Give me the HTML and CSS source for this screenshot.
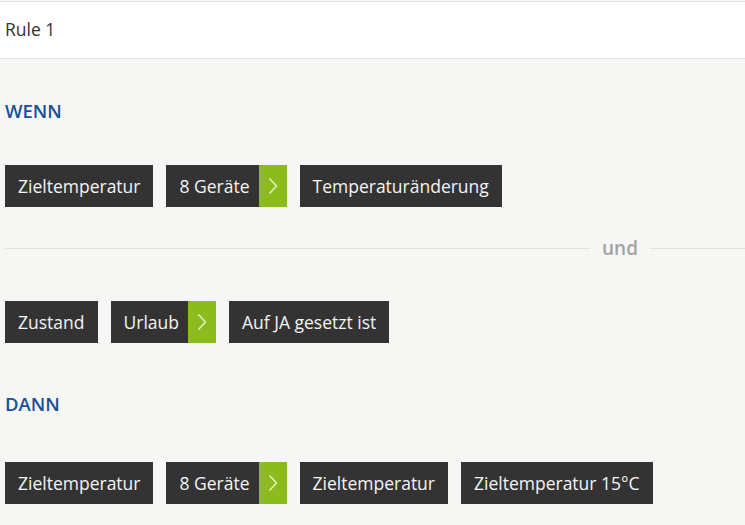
FILE: index.html
```html
<!DOCTYPE html>
<html lang="de">
<head>
<meta charset="utf-8">
<title>Rule 1</title>
<link rel="stylesheet" href="styles.css">
</head>
<body>
<div class="page">
  <header class="rule-header">Rule 1</header>
  <main class="rule-body">
    <h2 class="section-title title-wenn">WENN</h2>
    <div class="chip-row row-first">
      <span class="chip">Zieltemperatur</span>
      <span class="chip chip-split"><span class="chip-label">8 Geräte</span><span class="chip-arrow"><svg width="10" height="18" viewBox="0 0 10 18"><path d="M1.5 1.5 L8.5 9 L1.5 16.5" fill="none" stroke="currentColor" stroke-width="1.4"/></svg></span></span>
      <span class="chip">Temperaturänderung</span>
    </div>
    <div class="separator"><span class="sep-line"></span><span class="sep-text">und</span><span class="sep-line sep-line-end"></span></div>
    <div class="chip-row row-second">
      <span class="chip">Zustand</span>
      <span class="chip chip-split"><span class="chip-label">Urlaub</span><span class="chip-arrow"><svg width="10" height="18" viewBox="0 0 10 18"><path d="M1.5 1.5 L8.5 9 L1.5 16.5" fill="none" stroke="currentColor" stroke-width="1.4"/></svg></span></span>
      <span class="chip">Auf JA gesetzt ist</span>
    </div>
    <h2 class="section-title title-dann">DANN</h2>
    <div class="chip-row row-third">
      <span class="chip">Zieltemperatur</span>
      <span class="chip chip-split"><span class="chip-label">8 Geräte</span><span class="chip-arrow"><svg width="10" height="18" viewBox="0 0 10 18"><path d="M1.5 1.5 L8.5 9 L1.5 16.5" fill="none" stroke="currentColor" stroke-width="1.4"/></svg></span></span>
      <span class="chip">Zieltemperatur</span>
      <span class="chip">Zieltemperatur 15°C</span>
    </div>
  </main>
</div>
</body>
</html>
```

FILE: styles.css
```css
* { box-sizing: border-box; }
html, body { margin: 0; padding: 0; }
body {
  background: #f6f6f4;
  font-family: "Open Sans", "Liberation Sans", sans-serif;
  color: #333;
}
.page { padding-top: 1px; }
.rule-header {
  background: #fff;
  border-top: 1px solid #e2e2e2;
  border-bottom: 1px solid #e2e2e2;
  height: 58px;
  padding: 0 5px;
  font-size: 17.5px;
  line-height: 55px;
  color: #333;
}
.rule-body { padding: 0 0 0 5px; }
.section-title {
  margin: 0;
  font-size: 18.5px;
  font-weight: 650;
  color: #1a4f9a;
  line-height: 24px;
}
.title-wenn { padding-top: 40px; }
.title-dann { padding-top: 49px; }
.chip-row {
  display: flex;
  gap: 13px;
}
.row-first { margin-top: 42px; }
.row-second { margin-top: 42px; }
.row-third { margin-top: 46px; }
.chip {
  display: flex;
  align-items: center;
  height: 42px;
  padding: 0 13px;
  background: #333333;
  color: #f4f4f4;
  font-size: 17.5px;
  white-space: nowrap;
}
.chip-split { padding-right: 0; }
.chip-label { padding-right: 9px; }
.chip-arrow {
  display: flex;
  align-items: center;
  justify-content: center;
  width: 28px;
  height: 42px;
  background: #8bbb1c;
  color: #e9f5cf;
}
.separator {
  display: flex;
  align-items: center;
  margin-top: 30px;
  height: 22px;
}
.sep-line { flex: 1; height: 1px; background: #e2e2e0; }
.sep-line-end { flex: 0 0 95px; }
.sep-text {
  padding: 0 12px;
  color: #a3a3a3;
  font-weight: 600;
  font-size: 19px;
  line-height: 22px;
}
```
